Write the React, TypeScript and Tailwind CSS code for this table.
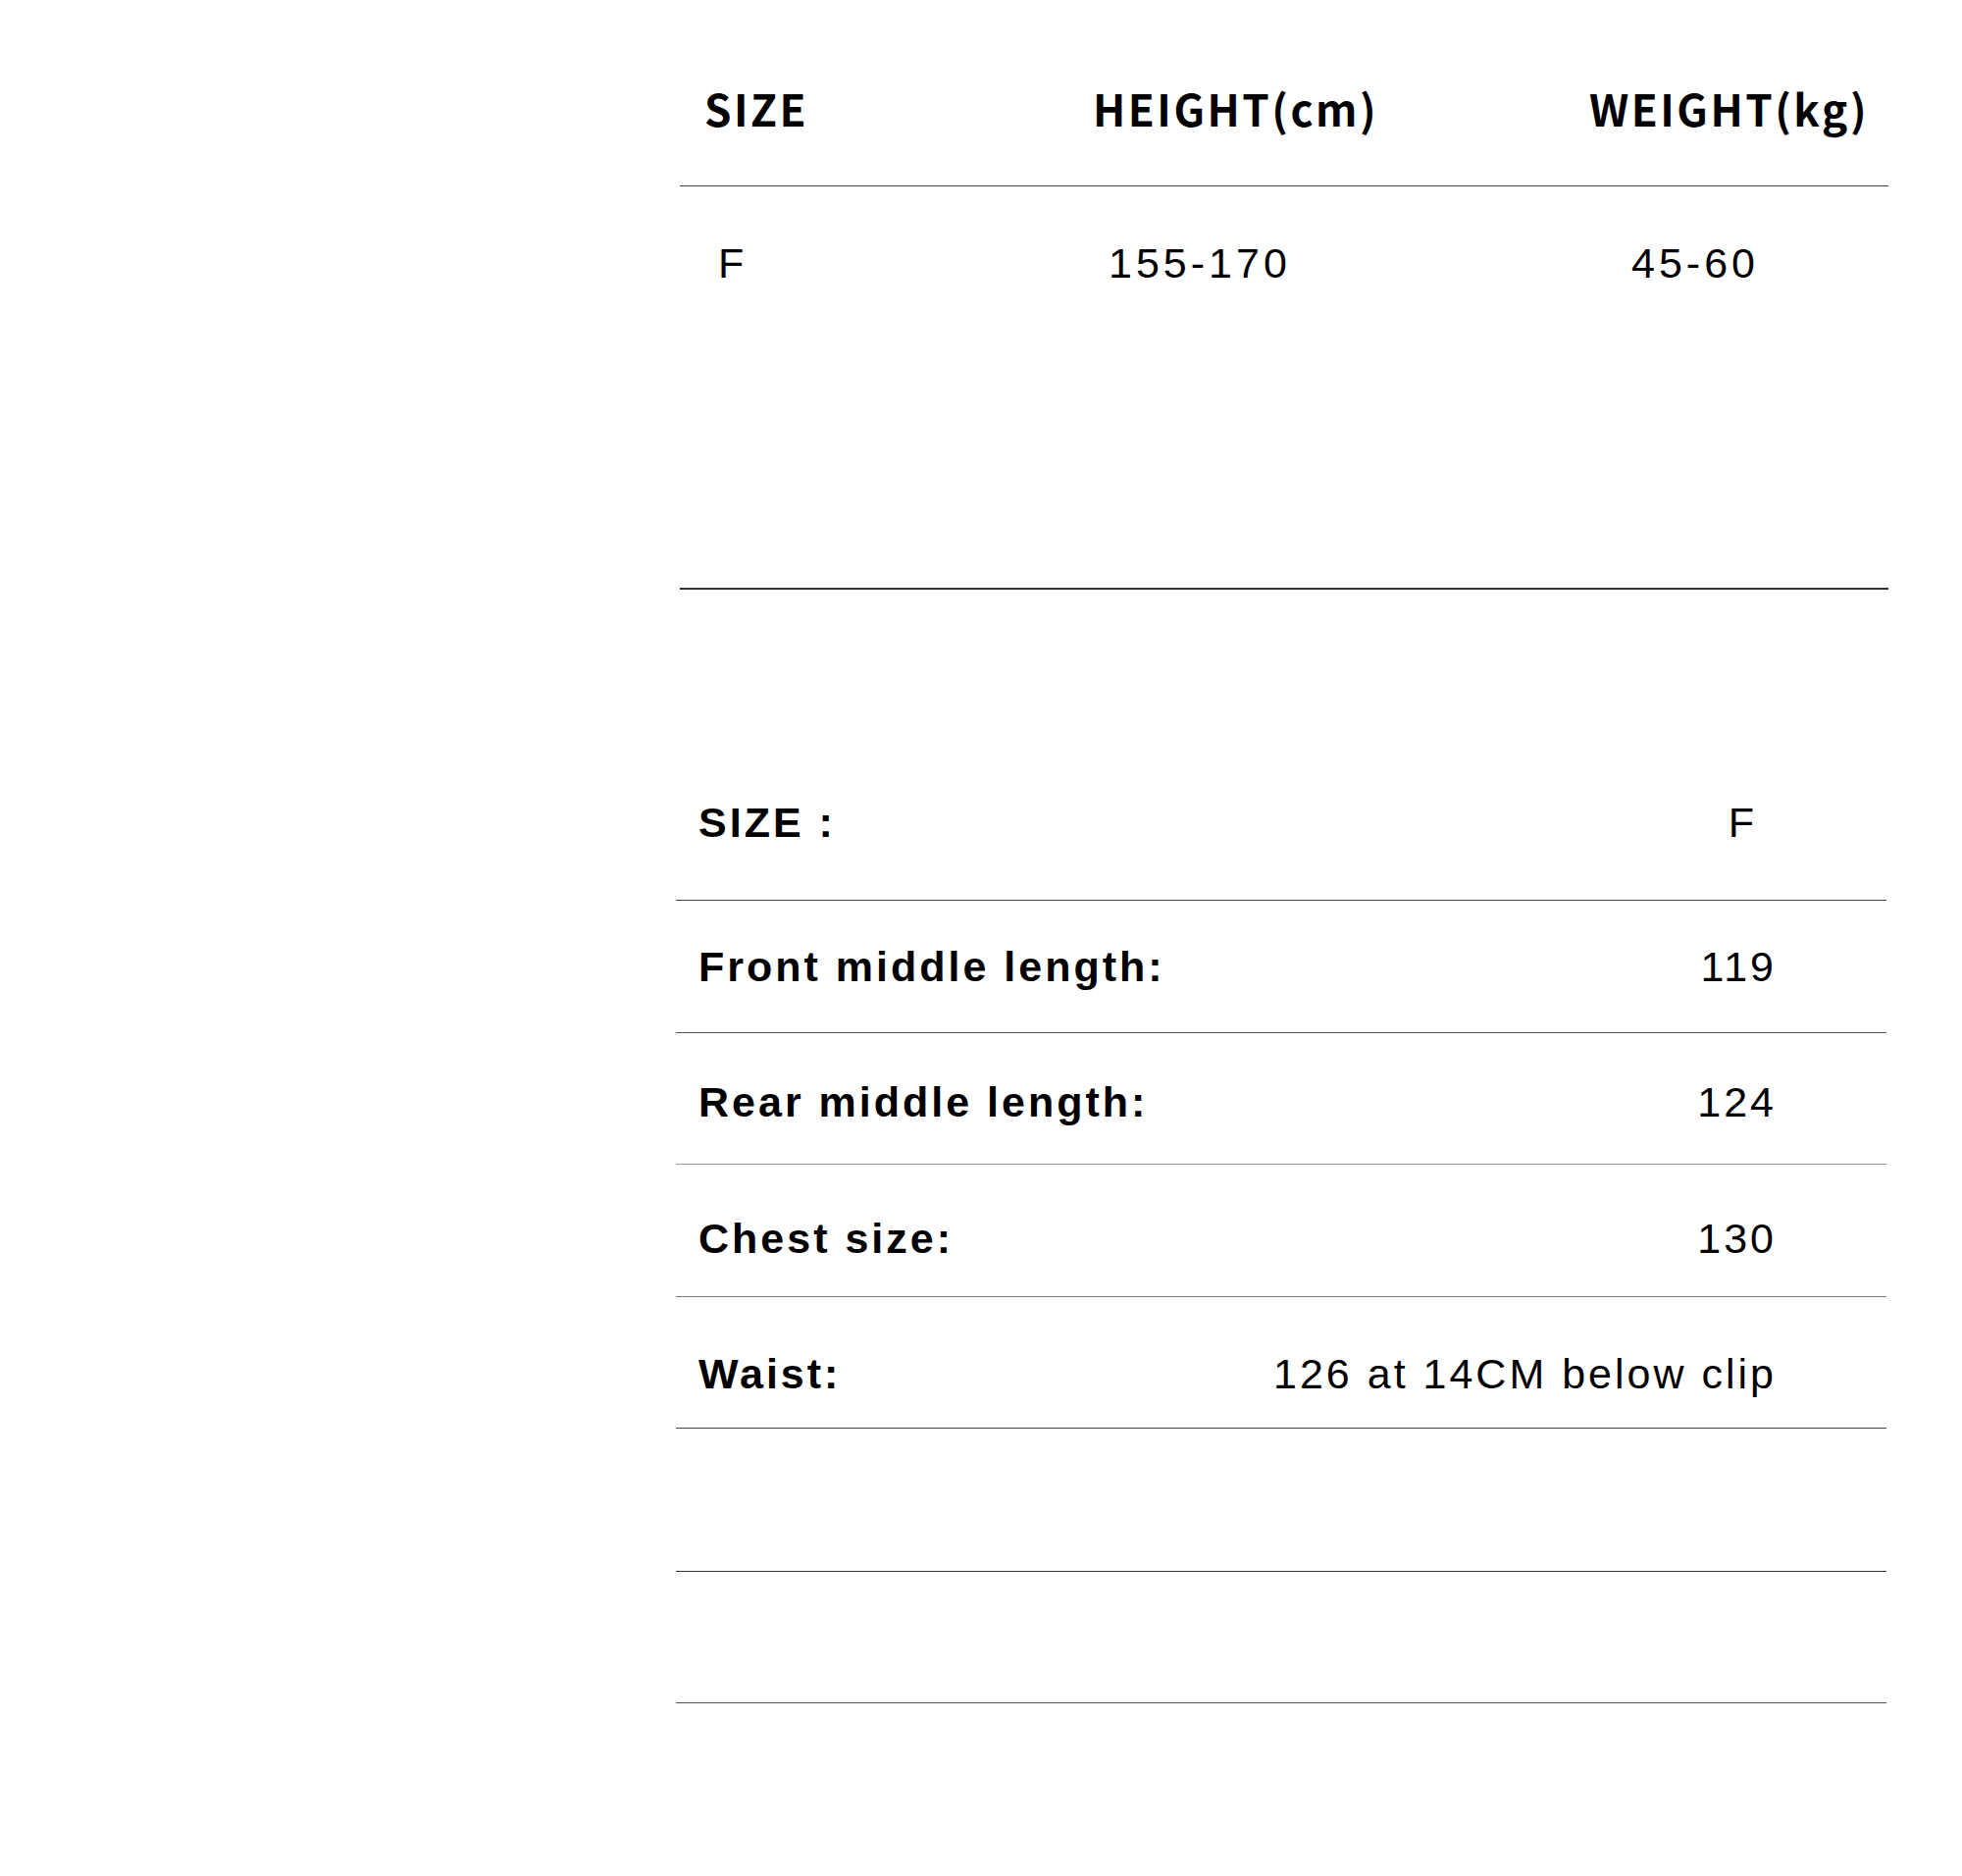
import React from "react";

const bodyFont = { fontFamily: '"Liberation Sans", Arial, sans-serif' };

export default function App() {
  const rows = [
    { label: "Front middle length:", value: "119", h: "h-[135px]", pt: "pt-[46px]", border: "border-[#555]" },
    { label: "Rear middle length:", value: "124", h: "h-[134px]", pt: "pt-[49px]", border: "border-[#999]" },
    { label: "Chest size:", value: "130", h: "h-[135px]", pt: "pt-[54px]", border: "border-[#777]" },
    { label: "Waist:", value: "126 at 14CM below clip", h: "h-[134px]", pt: "pt-[57px]", border: "border-[#444]" },
  ];
  return (
    <div className="w-[2000px] min-h-[1912px] bg-white text-black">
      {/* Table 1 */}
      <div className="ml-[693px] w-[1232px]">
        <div
          className="flex h-[190px] items-start border-b border-[#444] pt-[88px] text-[44px] font-bold leading-none tracking-[2.5px]"
          style={{ fontFamily: '"Noto Sans CJK SC", "Noto Sans", sans-serif' }}
        >
          <div className="w-[418px] pl-[25px]">SIZE</div>
          <div className="w-[509px] pl-[3px]">HEIGHT(cm)</div>
          <div className="flex-1">WEIGHT(kg)</div>
        </div>
        <div
          className="flex h-[411px] items-start border-b-2 border-[#333] pt-[57px] text-[43px] leading-none tracking-[4px]"
          style={bodyFont}
        >
          <div className="w-[418px] pl-[39px]">F</div>
          <div className="w-[509px] pl-[19px]">155-170</div>
          <div className="flex-1 pl-[43px]">45-60</div>
        </div>
      </div>

      {/* Table 2 */}
      <div className="ml-[689px] w-[1234px]" style={bodyFont}>
        <div className="flex h-[317px] items-start justify-between border-b border-[#444] pt-[216px] text-[43px] leading-none tracking-[3px]">
          <div className="pl-[23px] font-bold">SIZE :</div>
          <div className="pr-[132px]">F</div>
        </div>
        {rows.map((r) => (
          <div
            key={r.label}
            className={`flex ${r.h} items-start justify-between border-b ${r.border} ${r.pt} text-[43px] leading-none tracking-[3px]`}
          >
            <div className="pl-[23px] font-bold">{r.label}</div>
            <div className="pr-[112px]">{r.value}</div>
          </div>
        ))}
        <div className="h-[146px] border-b border-[#333]" />
        <div className="h-[134px] border-b border-[#555]" />
      </div>
    </div>
  );
}
